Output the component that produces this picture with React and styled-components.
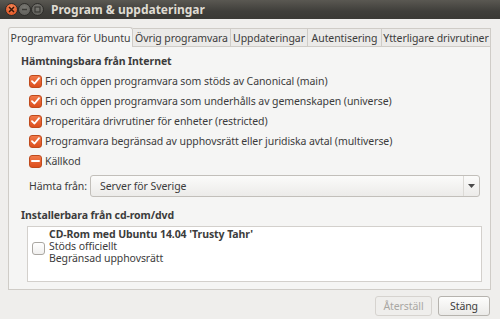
import React from "react";
import styled, { createGlobalStyle } from "styled-components";

const Global = createGlobalStyle`
  html, body { margin: 0; padding: 0; overflow: hidden; }
  body { font-family: "Noto Sans", "DejaVu Sans", sans-serif; }
`;

const Window = styled.div`
  width: 500px;
  height: 319px;
  background: #efeeec;
  display: flex;
  flex-direction: column;
  color: #3c3c3c;
  font-size: 10.5px;
  letter-spacing: -0.08px;
`;

const TitleBar = styled.div`
  height: 19px;
  background: linear-gradient(#5a5852, #3f3e3a 60%, #3a3935);
  display: flex;
  align-items: center;
  padding-left: 5px;
`;

const WinButton = styled.div`
  width: 13px;
  height: 13px;
  box-sizing: border-box;
  border-radius: 50%;
  margin-right: ${(p) => (p.last ? "7px" : "0")};
  background: ${(p) =>
    p.close
      ? "radial-gradient(circle at 50% 35%, #f48a5c, #dc4a18)"
      : "radial-gradient(circle at 50% 35%, #7a7974, #5a5954)"};
  border: 1px solid #2e2d2a;
  display: flex;
  align-items: center;
  justify-content: center;
`;

const Title = styled.div`
  color: #dfdbd2;
  font-weight: bold;
  font-size: 12px;
  letter-spacing: 0;
`;

const Body = styled.div`
  flex: 1;
  display: flex;
  flex-direction: column;
  padding: 8px 9px 0 8px;
`;

const TabRow = styled.div`
  display: flex;
  height: 19px;
`;

const Tab = styled.div`
  width: ${(p) => p.w}px;
  box-sizing: border-box;
  border: 1px solid #cfccc7;
  border-bottom: ${(p) => (p.active ? "none" : "1px solid #cfccc7")};
  border-left: ${(p) => (p.first ? "1px solid #cfccc7" : "none")};
  background: ${(p) => (p.active ? "#f5f5f4" : "#ebeae8")};
  border-radius: ${(p) => (p.active ? "3px 3px 0 0" : "0")};
  display: flex;
  align-items: center;
  justify-content: center;
  color: #3c3c3c;
  white-space: nowrap;
  height: ${(p) => (p.active ? "20px" : "19px")};
  margin-top: ${(p) => (p.active ? "0" : "1px")};
  position: relative;
  z-index: ${(p) => (p.active ? 1 : 0)};
`;

const Panel = styled.div`
  height: 244px;
  box-sizing: border-box;
  border: 1px solid #cfccc7;
  background: #f5f5f4;
  padding: 7px 8px 0 12px;
  display: flex;
  flex-direction: column;
`;

const Heading = styled.div`
  font-weight: bold;
  height: 14px;
  line-height: 14px;
  color: #3c3c3c;
  margin-top: ${(p) => p.mt || 0}px;
`;

const Options = styled.div`
  display: flex;
  flex-direction: column;
  padding-left: 8px;
  margin-top: 3px;
`;

const Row = styled.div`
  display: flex;
  align-items: center;
  height: 20px;
  gap: 3px;
`;

const Check = styled.span`
  width: 13px;
  height: 13px;
  box-sizing: border-box;
  border-radius: 3px;
  flex: none;
  display: flex;
  align-items: center;
  justify-content: center;
  background: ${(p) =>
    p.off ? "linear-gradient(#ffffff, #f0efee)" : "linear-gradient(#f07a4a, #dd4e1c)"};
  border: 1px solid ${(p) => (p.off ? "#aaa7a2" : "#bf4a1c")};
`;

const Label = styled.span`
  white-space: nowrap;
`;

const SourceRow = styled.div`
  display: flex;
  align-items: center;
  padding-left: 8px;
  margin-top: 3px;
  height: 24px;
`;

const SourceLabel = styled.span`
  width: 61px;
  flex: none;
  white-space: nowrap;
`;

const Combo = styled.div`
  width: 390px;
  height: 22px;
  box-sizing: border-box;
  border: 1px solid #c2bfba;
  border-radius: 3px;
  background: linear-gradient(#fbfbfa, #ecebe9);
  display: flex;
  align-items: stretch;
`;

const ComboText = styled.div`
  flex: 1;
  display: flex;
  align-items: center;
  padding-left: 9px;
  border-right: 1px solid #dcdad6;
`;

const ComboArrow = styled.div`
  width: 15px;
  display: flex;
  align-items: center;
  justify-content: center;
`;

const ListBox = styled.div`
  margin-top: 4px;
  margin-left: 6px;
  width: 455px;
  height: 56px;
  box-sizing: border-box;
  border: 1px solid #d3d0cc;
  background: #ffffff;
  display: flex;
  align-items: flex-start;
  padding: 1px 0 0 4px;
  gap: 4px;
`;

const ListCheck = styled.div`
  padding-top: 14px;
`;

const ListText = styled.div`
  display: flex;
  flex-direction: column;
  line-height: 12px;
`;

const Line = styled.span`
  height: 12px;
  font-weight: ${(p) => (p.bold ? "bold" : "normal")};
  white-space: nowrap;
`;

const ButtonRow = styled.div`
  display: flex;
  justify-content: flex-end;
  gap: 6px;
  margin-top: 6px;
  padding-right: 1px;
`;

const Button = styled.div`
  width: ${(p) => p.w}px;
  height: 20px;
  box-sizing: border-box;
  border: 1px solid ${(p) => (p.disabled ? "#d6d3cf" : "#b6b3ae")};
  border-radius: 3px;
  background: ${(p) => (p.disabled ? "#efeeec" : "linear-gradient(#fdfdfc, #ebeae8)")};
  color: ${(p) => (p.disabled ? "#a9a7a3" : "#3c3c3c")};
  display: flex;
  align-items: center;
  justify-content: center;
`;

const Tick = () => (
  <svg width="9" height="8" viewBox="0 0 9 8">
    <path d="M1 4.2 L3.5 6.5 L8 1.2" fill="none" stroke="#fff" strokeWidth="1.8" strokeLinecap="round" strokeLinejoin="round" />
  </svg>
);

const Dash = () => (
  <svg width="9" height="8" viewBox="0 0 9 8">
    <path d="M1 4 H8" stroke="#fff" strokeWidth="2" strokeLinecap="round" />
  </svg>
);

const tabs = [
  { label: "Programvara för Ubuntu", w: 125, active: true },
  { label: "Övrig programvara", w: 98 },
  { label: "Uppdateringar", w: 77 },
  { label: "Autentisering", w: 74 },
  { label: "Ytterligare drivrutiner", w: 109 },
];

const options = [
  "Fri och öppen programvara som stöds av Canonical (main)",
  "Fri och öppen programvara som underhålls av gemenskapen (universe)",
  "Properitära drivrutiner för enheter (restricted)",
  "Programvara begränsad av upphovsrätt eller juridiska avtal (multiverse)",
];

export default function App() {
  return (
    <Window>
      <Global />
      <TitleBar>
        <WinButton close>
          <svg width="7" height="7" viewBox="0 0 7 7">
            <path d="M1 1 L6 6 M6 1 L1 6" stroke="#3a1608" strokeWidth="1.5" />
          </svg>
        </WinButton>
        <WinButton>
          <svg width="7" height="7" viewBox="0 0 7 7">
            <path d="M1 3.5 H6" stroke="#3a3935" strokeWidth="1.5" />
          </svg>
        </WinButton>
        <WinButton last>
          <svg width="7" height="7" viewBox="0 0 7 7">
            <rect x="1" y="1" width="5" height="5" fill="none" stroke="#3a3935" strokeWidth="1.2" />
          </svg>
        </WinButton>
        <Title>Program &amp; uppdateringar</Title>
      </TitleBar>
      <Body>
        <TabRow>
          {tabs.map((t, i) => (
            <Tab key={t.label} w={t.w} active={t.active} first={i === 0}>
              {t.label}
            </Tab>
          ))}
        </TabRow>
        <Panel>
          <Heading>Hämtningsbara från Internet</Heading>
          <Options>
            {options.map((o) => (
              <Row key={o}>
                <Check><Tick /></Check>
                <Label>{o}</Label>
              </Row>
            ))}
            <Row>
              <Check><Dash /></Check>
              <Label>Källkod</Label>
            </Row>
          </Options>
          <SourceRow>
            <SourceLabel>Hämta från:</SourceLabel>
            <Combo>
              <ComboText>Server för Sverige</ComboText>
              <ComboArrow>
                <svg width="7" height="4" viewBox="0 0 7 4">
                  <path d="M0 0 H7 L3.5 4 Z" fill="#4a4a4a" />
                </svg>
              </ComboArrow>
            </Combo>
          </SourceRow>
          <Heading mt={10}>Installerbara från cd-rom/dvd</Heading>
          <ListBox>
            <ListCheck>
              <Check off />
            </ListCheck>
            <ListText>
              <Line bold>CD-Rom med Ubuntu 14.04 'Trusty Tahr'</Line>
              <Line>Stöds officiellt</Line>
              <Line>Begränsad upphovsrätt</Line>
            </ListText>
          </ListBox>
        </Panel>
        <ButtonRow>
          <Button w={57} disabled>Återställ</Button>
          <Button w={52}>Stäng</Button>
        </ButtonRow>
      </Body>
    </Window>
  );
}
